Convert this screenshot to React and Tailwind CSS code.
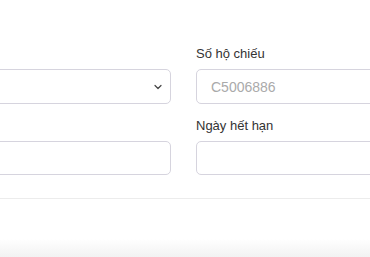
import { ChevronDown } from "lucide-react";

const Field = ({ label, children }) => (
  <div className="flex flex-col">
    <label className="h-[25px] text-[13px] leading-[20px] text-[#333]">{label}</label>
    {children}
  </div>
);

const App = () => {
  return (
    <div className="h-[257px] w-[370px] overflow-hidden bg-white font-['Liberation_Sans',Arial,sans-serif]">
      <div className="ml-[-30px] grid w-[427px] grid-cols-2 gap-x-[25px] gap-y-[12px] pt-[44px]">
        <Field label="">
          <div className="flex h-[35px] items-center justify-end rounded-[5px] border border-[#d6d4de] bg-white pr-[6px]">
            <ChevronDown size={12} strokeWidth={2.4} className="text-[#444]" />
          </div>
        </Field>
        <Field label="Số hộ chiếu">
          <input
            placeholder="C5006886"
            className="h-[35px] rounded-[5px] border border-[#d6d4de] bg-white px-[14px] text-[14px] text-[#333] outline-none placeholder:text-[#aaa]"
          />
        </Field>
        <Field label="">
          <input className="h-[34px] rounded-[5px] border border-[#d6d4de] bg-white px-[14px] text-[14px] outline-none" />
        </Field>
        <Field label="Ngày hết hạn">
          <input className="h-[34px] rounded-[5px] border border-[#d6d4de] bg-white px-[14px] text-[14px] outline-none" />
        </Field>
      </div>
      <div className="mt-[23px] border-t border-[#ececec]" />
      <div className="mt-[40px] h-[18px] bg-gradient-to-b from-white to-[#f2f2f2]" />
    </div>
  );
};

export default App;
